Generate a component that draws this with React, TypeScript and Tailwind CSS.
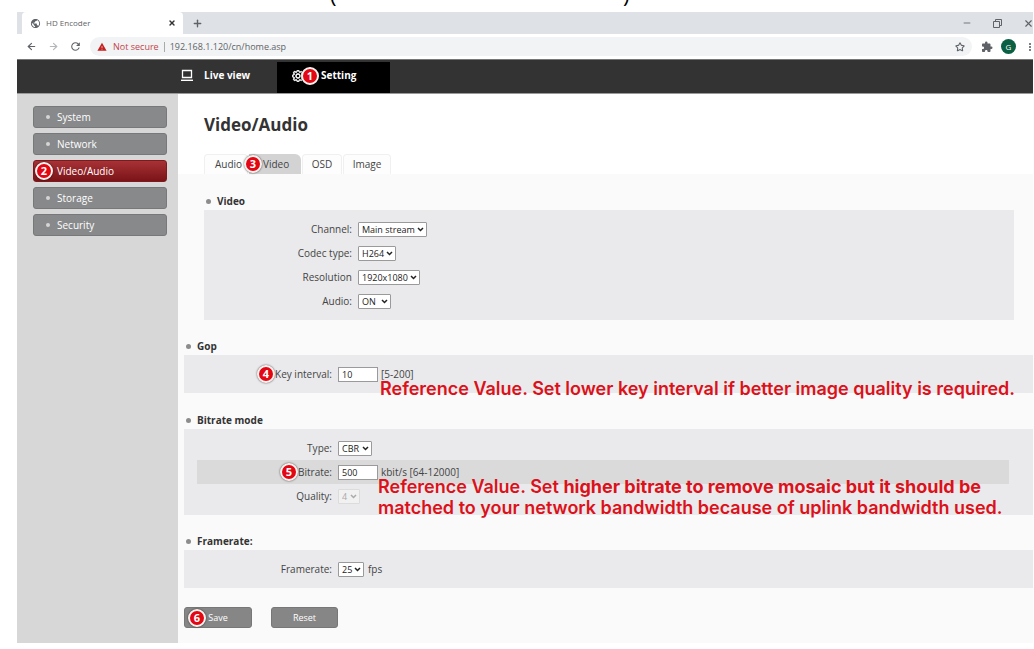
import { useState, type ReactNode } from 'react'
import { X, Plus, Minus, Star, ArrowLeft, ArrowRight } from 'lucide-react'
import { BsGear } from 'react-icons/bs'
import { MdExtension, MdWarning, MdPublic, MdMoreVert, MdRefresh } from 'react-icons/md'

const menu = ['System', 'Network', 'Video/Audio', 'Storage', 'Security']

function Callout({ n, className }: { n: number; className: string }) {
  return (
    <span
      className={`absolute z-10 flex h-[18px] w-[18px] items-center justify-center rounded-full border-2 border-[#fbf3ef] bg-[#e30613] pb-px text-[11px] leading-none font-bold text-white shadow-[0_0_2px_rgba(0,0,0,0.7)] ${className}`}
    >
      {n}
    </span>
  )
}

function Section({ title, className = '', children }: { title: string; className?: string; children: ReactNode }) {
  return (
    <section className={className}>
      <h2 className="flex h-[18px] items-center gap-[6px] pl-[2px] font-bold text-[#333]">
        <span className="h-[5px] w-[5px] rounded-full bg-[#8c8c8c]" />
        {title}
      </h2>
      <div className="bg-[#eaeaec] py-[7px] pr-6 pl-[13px]">{children}</div>
    </section>
  )
}

type RowProps = { id: string; label: string; active?: boolean; children: ReactNode }

function Row({ id, label, active, children }: RowProps) {
  return (
    <div className={`relative flex h-6 items-center gap-[6px] ${active ? 'bg-[#dadada]' : ''}`}>
      <label htmlFor={id} className="w-[135px] shrink-0 text-right">
        {label}
      </label>
      {children}
    </div>
  )
}

type SelectProps = { id: string; options: string[]; width: string; disabled?: boolean }

function Select({ id, options, width, disabled }: SelectProps) {
  return (
    <span className={`relative h-[15px] ${width}`}>
      <select
        id={id}
        disabled={disabled}
        className="block h-full w-full appearance-none rounded-[1px] border border-[#9a9a9a] bg-white pl-[3px] text-[9px] leading-none text-[#222] disabled:border-[#dcdcdc] disabled:bg-[#f1f1f1] disabled:text-[#aaa]"
      >
        {options.map((o) => (
          <option key={o}>{o}</option>
        ))}
      </select>
      <svg
        viewBox="0 0 7 5"
        className={`pointer-events-none absolute top-[5px] right-[3px] h-[5px] w-[7px] ${disabled ? 'text-[#aaa]' : 'text-[#222]'}`}
      >
        <path d="M1 1l2.500 2.500L6 1" fill="none" stroke="currentColor" strokeWidth="1.500" />
      </svg>
    </span>
  )
}

const inputClass = 'h-[15px] w-10 border border-[#9a9a9a] bg-white pl-[3px] text-[9px] text-[#222]'
const noteClass =
  "absolute z-10 font-['Inter',sans-serif] text-[18px] leading-[21px] font-semibold whitespace-nowrap text-[#dc111a]"
const tabClass = 'rounded-t-[4px] border border-b-0 border-[#f0f0f0] bg-[#fdfdfd]'

function BrowserBar() {
  return (
    <header className="text-[#5f6368]">
      <div className="flex h-[22px] items-center bg-[#dee1e6]">
        <div className="ml-[5px] flex h-full w-[161px] items-center rounded-t bg-white pl-2 text-[8px]">
          <MdPublic className="h-[11px] w-[11px]" />
          <span className="ml-[5px] flex-1">HD Encoder</span>
          <button type="button" aria-label="Close tab" className="mr-[7px]">
            <X className="h-2 w-2 text-[#333]" strokeWidth={4} />
          </button>
        </div>
        <button type="button" aria-label="New tab" className="ml-[9px]">
          <Plus className="h-[11px] w-[11px]" strokeWidth={3} />
        </button>
        <div className="-mr-px ml-auto flex items-center gap-[21px]">
          <button type="button" aria-label="Minimize">
            <Minus className="h-[10px] w-[10px]" />
          </button>
          <button type="button" aria-label="Restore">
            <svg viewBox="0 0 9 9" className="h-[9px] w-[9px]" fill="none" stroke="currentColor">
              <path d="M0.500 2.500h6v6h-6z" />
              <path d="M2.500 2.500v-2h6v6h-2" />
            </svg>
          </button>
          <button type="button" aria-label="Close window">
            <X className="h-[11px] w-[11px]" strokeWidth={2.5} />
          </button>
        </div>
      </div>
      <div className="flex h-[25px] items-center bg-white pl-[9px]">
        <ArrowLeft className="h-[11px] w-[11px]" strokeWidth={2.5} />
        <ArrowRight className="ml-[11px] h-[11px] w-[11px] text-[#b5b7ba]" strokeWidth={2.5} />
        <MdRefresh className="ml-[10px] h-[13px] w-[13px]" />
        <div className="ml-2 flex h-[19px] flex-1 items-center rounded-full bg-[#f1f3f4] pl-[7px] text-[9px]">
          <MdWarning className="h-[10px] w-[10px] text-[#c5221f]" />
          <span className="ml-[6px] text-[#c5434a]">Not secure</span>
          <span className="mx-[5px] h-[10px] w-px bg-[#aaa]" />
          <span className="flex-1">192.168.1.120/cn/home.asp</span>
          <Star className="mr-[7px] h-[10px] w-[10px]" strokeWidth={2.5} />
        </div>
        <MdExtension className="ml-[9px] h-3 w-3" />
        <span className="ml-2 flex h-[15px] w-[15px] items-center justify-center rounded-full bg-[#0b5f43] text-[8px] text-white">
          G
        </span>
        <MdMoreVert className="-mr-[3px] ml-2 h-3 w-3 shrink-0" />
      </div>
    </header>
  )
}

export default function App() {
  const [page, setPage] = useState('Video/Audio')

  return (
    <div className="bg-white font-['Open_Sans','Noto_Sans',sans-serif] text-[10px] text-[#444]">
      <div className="flex h-3 items-end overflow-hidden pb-[7px] pl-[330px] text-[22px] leading-none text-black">
        <span className="w-[293px]">(</span>
        <span>)</span>
      </div>

      <div className="mr-px ml-[17px] overflow-hidden">
        <BrowserBar />

        <nav className="flex h-[35px] border-t border-b border-t-[#777] border-b-[#999] bg-[#333] pt-[2px] pl-[163px] font-bold text-white">
          <button type="button" className="flex w-[97px] items-center gap-[10px] pb-[4px]">
            <svg viewBox="0 0 14 13" className="h-[13px] w-[14px]">
              <path d="M2.500 1.500h9v7h-9z" fill="none" stroke="currentColor" strokeWidth="1.300" />
              <path d="M1 11.300h12" stroke="currentColor" strokeWidth="1.400" />
            </svg>
            Live view
          </button>
          <button type="button" className="relative flex w-[113px] items-center gap-[17px] bg-black pb-[4px] pl-[15px]">
            <BsGear className="h-3 w-3" strokeWidth={1} />
            <Callout n={1} className="top-[5px] left-[24px]" />
            Setting
          </button>
        </nav>

        <div className="flex">
          <aside className="flex w-[161px] shrink-0 flex-col gap-[5px] bg-[#d7d7d8] px-4 pt-[12px] pr-[11px]">
            {menu.map((item) => (
              <button
                key={item}
                type="button"
                onClick={() => setPage(item)}
                className={`relative flex h-[22px] items-center gap-[7px] rounded-[3px] border pl-3 text-white ${
                  item === page
                    ? 'border-[#7d1a1e] bg-linear-to-b from-[#a83236] to-[#7a1318]'
                    : 'border-[#77787a] bg-[#88898b]'
                }`}
              >
                <span className="h-1 w-1 rounded-full bg-[#d5d5d5]" />
                {item}
                {item === 'Video/Audio' && <Callout n={2} className="top-px left-px" />}
              </button>
            ))}
          </aside>

          <main className="min-w-0 flex-1 bg-[#fafafa]">
            <div className="bg-white pt-[19px] pl-[26px]">
              <h1 className="h-6 text-[17px] leading-6 font-bold text-[#333]">Video/Audio</h1>
              <div role="tablist" className="mt-[17px] flex h-5 gap-px">
                <button type="button" role="tab" className={`w-[44px] pl-[10px] text-left ${tabClass}`}>
                  Audio
                </button>
                <button
                  type="button"
                  role="tab"
                  aria-selected
                  className="relative w-[52px] rounded-tr-[6px] bg-[#d3d3d4] pl-[14px] text-left"
                >
                  Video
                  <Callout n={3} className="top-px left-[-5px]" />
                </button>
                <button type="button" role="tab" className={`w-[40px] ${tabClass}`}>
                  OSD
                </button>
                <button type="button" role="tab" className={`w-[48px] ${tabClass}`}>
                  Image
                </button>
              </div>
            </div>

            <form className="flex flex-col gap-[17px] pt-[18px] pb-[15px] pl-[6px]" onSubmit={(e) => e.preventDefault()}>
              <Section title="Video" className="mr-[19px] ml-5">
                <Row id="channel" label="Channel:">
                  <Select id="channel" options={['Main stream']} width="w-[69px]" />
                </Row>
                <Row id="codec" label="Codec type:">
                  <Select id="codec" options={['H264']} width="w-[38px]" />
                </Row>
                <Row id="resolution" label="Resolution">
                  <Select id="resolution" options={['1920x1080']} width="w-[62px]" />
                </Row>
                <Row id="audio" label="Audio:">
                  <Select id="audio" options={['ON', 'OFF']} width="w-[33px]" />
                </Row>
              </Section>

              <Section title="Gop">
                <Row id="interval" label="Key interval:">
                  <Callout n={4} className="top-[3px] left-[60px]" />
                  <input id="interval" defaultValue="10" className={inputClass} />
                  <span className="-ml-[3px]">[5-200]</span>
                  <p className={`${noteClass} top-[16px] left-[183px]`}>
                    Reference Value. Set lower key interval if better image quality is required.
                  </p>
                </Row>
              </Section>

              <Section title="Bitrate mode" className="mt-px">
                <Row id="type" label="Type:">
                  <Select id="type" options={['CBR', 'VBR']} width="w-[34px]" />
                </Row>
                <Row id="bitrate" label="Bitrate:" active>
                  <Callout n={5} className="top-[3px] left-[83px]" />
                  <input id="bitrate" defaultValue="500" className={inputClass} />
                  <span className="-ml-[3px]">kbit/s [64-12000]</span>
                  <p className={`${noteClass} top-[16px] left-[181px]`}>
                    Reference Value. Set <strong className="font-bold">higher bitrate to remove mosaic but it should be</strong>
                    <br />
                    matched to your network bandwidth because of uplink bandwidth used.
                  </p>
                </Row>
                <Row id="quality" label="Quality:">
                  <Select id="quality" options={['4']} width="w-[22px]" disabled />
                </Row>
              </Section>

              <Section title="Framerate:">
                <Row id="framerate" label="Framerate:">
                  <Select id="framerate" options={['25']} width="w-[26px]" />
                  <span className="-ml-[2px]">fps</span>
                </Row>
              </Section>

              <div className="mt-[2px] flex gap-[19px] text-[9px] text-white">
                <button type="submit" className="relative h-[21px] w-[68px] rounded-[3px] border border-[#777] bg-[#868687]">
                  <Callout n={6} className="top-px left-[3px]" />
                  Save
                </button>
                <button type="reset" className="h-[21px] w-[67px] rounded-[3px] border border-[#777] bg-[#868687]">
                  Reset
                </button>
              </div>
            </form>
          </main>
        </div>
      </div>
    </div>
  )
}
